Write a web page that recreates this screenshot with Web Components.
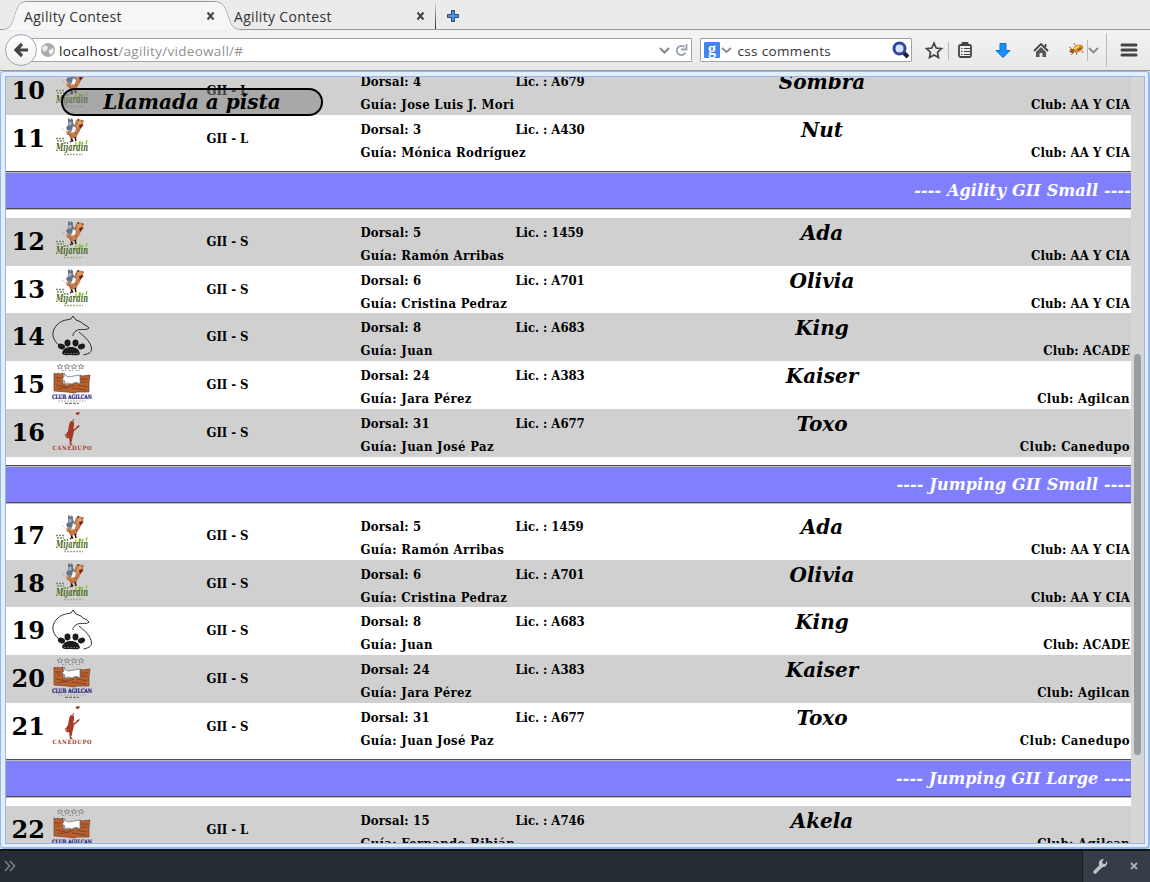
<!DOCTYPE html>
<html lang="es"><head><meta charset="utf-8"><title>Agility Contest</title>
<style>html,body{margin:0;height:882px;overflow:hidden;background:#ececec}</style></head><body>
<agility-app></agility-app>
<script>
const define=(name,html,setup)=>customElements.define(name,class extends HTMLElement{
  connectedCallback(){ if(this.shadowRoot)return; const r=this.attachShadow({mode:'open'}); r.innerHTML=typeof html==='function'?html(this):html; if(setup)setup(this,r); }
});

const logos={
mijardin:`<svg width="34" height="40" viewBox="0 0 34 40" style="margin-left:4px">
 <path d="M6 9.500l2 3 3 1 4-1 3-4 2-6 2-1.500 4 1 1 2 .5 4-2.500 1-1 4-2 3-1 2-.5 2-2.500 0-2 1-2-1-1-3-2 0-1-4-3-1z" fill="#c07c4c"/>
 <path d="M12 1l1-1 1.500 2 1-2 1.500 2 0 3 2 3-2 4-5 1-2-3 2-3z" fill="#667384"/><path d="M12.500 4l3 0 0 3-3 1z" fill="#a3b4c6"/>
 <path d="M17 8l3 2-1 4-4 1 1-3z" fill="#eef3f6"/><path d="M22 2l3 1 1 3-3 2-2 3z" fill="#dd9c66"/><path d="M23 7l4-1-1 3-2 2z" fill="#702018"/><path d="M21 2l2-1 0 2zM26 2l2 1-1 1z" fill="#3b2214"/>
 <path d="M13 16l2 3M19 14l2 2" stroke="#915331"/><path d="M15 20.500l2 3M19 19l1 4M17 22l-3 2" stroke="#33140c" stroke-width="1.500"/>
 <path d="M0 20.500h8M1 23h7" stroke="#7b8b68" stroke-width="1.500" stroke-dasharray="2 1"/>
 <path d="M8 36.500h19" stroke="#a3ac93" stroke-width="1.500" stroke-dasharray="2 1"/>
 <text x="0" y="33" textLength="32" lengthAdjust="spacingAndGlyphs" font-family="DejaVu Serif" font-style="italic" font-weight="bold" font-size="11.500" fill="#4c6a1e">Mijardin</text>
 <path d="M20 24v3M24 23l-1 4M27 24l-1 3M31 22l-1 4" stroke="#91c51f" stroke-width="1.200"/></svg>`,
acade:`<svg width="40" height="40" viewBox="0 0 40 40"><path d="M7 29C-1 23-1 14 6 8c4-4 9-4 13-5l2-3 3 4 5 2c2 3 6 3 8 6-3 3-10 0-13 3-3 2-3 3-3 5M27 16c7 6 12 10 12.500 17 0 4-4 5-8 6" fill="none" stroke="#181818" stroke-width=".9"/>
 <ellipse cx="9.500" cy="30.500" rx="3.700" ry="2.700" fill="#1c1b19" transform="rotate(25 9.500 30.500)"/><ellipse cx="15.500" cy="27" rx="3" ry="3.400" fill="#1c1b19"/><ellipse cx="23.500" cy="27" rx="3" ry="3.400" fill="#1c1b19"/><ellipse cx="29.500" cy="30.500" rx="3.700" ry="2.700" fill="#1c1b19" transform="rotate(-25 29.500 30.500)"/><path d="M10 37c1-4 4-6 9-6s8 2 9 7c-2 2-5 1-9 1s-8 1-9-2z" fill="#1c1b19"/><path d="M12 37.500h14" stroke="#888" stroke-width=".7" stroke-dasharray="2 1"/></svg>`,
agilcan:`<svg width="40" height="41" viewBox="0 0 40 41"><g fill="none" stroke="#888" stroke-width=".8"><path d="M8 0l1 2h2l-2 1 1 2-2-1-2 1 1-2-2-1h2z"/><path d="M15 0l1 2h2l-2 1 1 2-2-1-2 1 1-2-2-1h2z"/><path d="M22 0l1 2h2l-2 1 1 2-2-1-2 1 1-2-2-1h2z"/><path d="M29 0l1 2h2l-2 1 1 2-2-1-2 1 1-2-2-1h2z"/><path d="M10 6.500h4M17 6.500h4M24 6.500h4" stroke-dasharray="2 1"/></g>
 <path d="M2 9l2 1 2-1 2 1 3-1v11l4 1 9-2 4 1V11l2 1 8-1-1 7v10H25l-3 1-7-1-13-1z" fill="#b8602e" stroke="#70402a" stroke-width=".7"/><path d="M3 14h6M28 15h8M4 21l10 2M25 21l10 2M5 25l12-2M20 24l14 2M5 17h3M14 24l8-3M29 18h6" stroke="#7a3c20" stroke-width=".8" fill="none"/>
 <path d="M12 9l1 2 3 2 12-2v9l-4-2-4 2-4-1-4 1 1-3-3-2 2-2z" fill="#fff" stroke="#777" stroke-width=".8"/>
 <text x="0" y="35" textLength="40" lengthAdjust="spacingAndGlyphs" font-family="DejaVu Serif" font-size="6.200" font-weight="bold" fill="#211878" stroke="#211878" stroke-width=".2">CLUB AGILCAN</text><path d="M6 37h28" stroke="#999" stroke-width=".8" stroke-dasharray="2 1"/><path d="M13 39.300h14" stroke="#555" stroke-dasharray="3 1"/></svg>`,
canedupo:`<svg width="40" height="40" viewBox="0 0 40 40"><path d="M23.500 1.500l2-1.500 2.500.5-1 2-2.500.5zM18 10l1-1 3 1 0 4-1 3 3-1 1-2 3-1-1 2-5 4-1 5-1 3-1 4 2 2-3-.5-1-6.500-2 0-1-4 2-3 1-6z" fill="#a63a29"/><path d="M22 7l-2 3M16 26c-3 0-2-3-3-4M20 27l-2 5 2 1" stroke="#a63a29" fill="none"/><text x="0.500" y="38" textLength="39" font-family="DejaVu Serif" font-size="5.800" fill="#a63a29">CANEDUPO</text></svg>`};

define('call-row',el=>{const a=n=>el.getAttribute(n);return `<style>
:host{display:grid;grid-template-columns:39px 115px 200px 155px 207px 200px 1fr;height:47.72px;background:var(--bg);font:bold 13px "DejaVu Serif",serif;color:#000;font-stretch:condensed;white-space:nowrap;overflow:hidden;box-sizing:border-box}
.n{font-size:24px;font-stretch:normal;line-height:48px;padding-left:5.500px}.logo{padding:3px 0 0 7px}.logo svg{display:block}
.g{line-height:47px;padding-left:46.500px;letter-spacing:-.08px}.c{line-height:23px;padding-top:3px;letter-spacing:.2px;padding-left:.4px}.c span{letter-spacing:.33px}.lic{letter-spacing:-.05px}.name{font-size:20px;font-stretch:normal;font-style:italic;text-align:center;line-height:30px}.club{text-align:right;padding:26px 1px 0 0;line-height:23px;letter-spacing:var(--club,.2px)}</style>
<div class="n">${a('num')}</div><div class="logo">${logos[a('logo')]}</div><div class="g">GII - ${a('cat')}</div>
<div class="c">Dorsal: ${a('dorsal')}<br><span>Guía: ${a('guia')}</span></div><div class="c lic">Lic. : ${a('lic')}</div><div class="name">${a('dog')}</div><div class="club">Club: ${a('club')}</div>`});

define('round-header',`<style>:host{display:block;height:55.4px;padding-top:8.4px;box-sizing:border-box;background:#fff}
div{height:35px;border-top:2px solid #bbb;border-bottom:2px solid #bbb;background:#8080ff;color:#fff;font:italic bold 16px/35px "DejaVu Serif",serif;letter-spacing:.12px;text-align:right;position:relative}
div:before,div:after{content:"";position:absolute;left:0;right:0;height:1px;background:#505050}div:before{top:-2px}div:after{bottom:-1px}</style><div>---- <slot></slot> ----</div>`);

define('browser-tab',`<style>:host{display:flex;width:210px;height:30px;box-sizing:border-box;padding:1px 11px 0 7px;font:14px/32px "Open Sans",sans-serif;letter-spacing:.32px;color:#333;justify-content:space-between;position:relative}svg.x{margin-top:10px}</style><span><slot></slot></span><svg class="x" width="10" height="10"><path d="M1.500 1.500l6 7M7.500 1.500l-6 7" stroke="#444" stroke-width="2"/></svg>`);

define('browser-chrome',`<style>:host{display:block;height:71px;background:linear-gradient(#ebebeb,#ebebeb 30px,#f3f3f3 31px,#e8e8e8);box-sizing:border-box;border-bottom:1px solid #999;font-family:"Open Sans",sans-serif;color:#333}
.tabs{height:30px;display:flex;padding-left:17px;position:relative}.shape{position:absolute;left:0;top:0}.tabs browser-tab{z-index:1}.sep{width:1px;height:30px;margin-left:-2px;background:linear-gradient(#e8e8e8,#222)}.plus{margin:10px 0 0 11px}
.bar{height:40px;display:flex;align-items:center;padding-left:5px}
.back{width:30px;height:30px;border:1px solid #9aa8b8;border-radius:50%;background:linear-gradient(#fff,#f0f0f0);display:flex;align-items:center;justify-content:center;z-index:1;flex:none}
.f{background:#fff;border:1px solid #a4a4a4;display:flex;align-items:center;box-sizing:border-box;height:24px;font-size:13.500px;line-height:20px;border-radius:1px}
.f span{padding-top:2px}
.url{width:664px;margin-left:-8px;padding-left:12px;border-left:0}.url b{font-weight:400;color:#222}.url span{color:#929292;margin-left:4px;flex:1;letter-spacing:.3px}
.search{width:212px;margin-left:8px;padding:0 1px 0 3px}.search span{flex:1;margin-left:5px;letter-spacing:.35px}.icons{display:block;margin-left:1px;margin-top:1px}</style>
<div class="tabs"><svg class="shape" width="1150" height="30"><path d="M0 29.500H3C19 29.500 11 1.500 27 1.500H214C232 1.500 224 29.500 240 29.500H1150V31H0z" fill="none" stroke="#999"/><path d="M3 30C19 29.500 11 2 27 2H214C232 2 224 29.500 240 30z" fill="#f6f6f6"/></svg>
<browser-tab>Agility Contest</browser-tab><browser-tab>Agility Contest</browser-tab><i class="sep"></i><svg class="plus" width="13" height="13"><path d="M4.500.5h3v4h4v3h-4v4h-3v-4h-4v-3h4z" fill="#5f91d0" stroke="#164788"/></svg></div>
<div class="bar"><div class="back"><svg width="16" height="16"><path d="M9 2L3 8l6 6M3 8h12" fill="none" stroke="#444" stroke-width="3.200"/></svg></div>
<div class="url f"><svg width="14" height="14"><circle cx="7" cy="7" r="7" fill="#aaa"/><path d="M1 5l3-3 3 2-1 3-3 2zM8 7l4-2 1 3-3 4-2-2z" fill="#eee"/></svg><span><b>localhost</b>/agility/videowall/#</span><svg width="36" height="20"><path d="M5 8l4.500 4.500L14 8" fill="none" stroke="#888" stroke-width="2"/><path d="M29.500 7a4.600 4.600 0 1 0 1 5.500M31.500 4v5.500h-5.500" fill="none" stroke="#99a4ae" stroke-width="1.800"/></svg></div>
<div class="search f"><svg width="28" height="20"><rect x="0" y="2" width="16" height="16" rx="1" fill="#4384f5"/><text x="4" y="13.500" font-family="Liberation Serif" font-size="16" font-weight="bold" fill="#fff">g</text><path d="M18 8l4.500 4L27 8" fill="none" stroke="#888" stroke-width="1.800"/></svg><span>css comments</span><svg width="18" height="18"><path d="M11 11l5 5" stroke="#222" stroke-width="4"/><circle cx="7.500" cy="7.500" r="5.500" fill="#d6e4fa" stroke="#2e479b" stroke-width="3"/></svg></div>
<svg class="icons" width="237" height="39"><path d="M21 12l2.200 5 5.300.6-4 3.600 1 5.300-4.500-2.600-4.500 2.600 1-5.300-4-3.600 5.300-.6z" fill="none" stroke="#444" stroke-width="1.700"/><g stroke="#bbb"><path d="M35.500 11v18M174.500 9v21M193.500 2v34"/></g><rect x="46" y="14" width="12" height="12" rx="1.500" fill="none" stroke="#444" stroke-width="1.800"/><path d="M49 13v-1.500h6v1.500z" fill="#444" stroke="#444"/><path d="M48 17.500h1.500M51 17.500h6M48 20.500h1.500M51 20.500h6M48 23.500h1.500M51 23.500h6" stroke="#444"/><path d="M87 12.500h6v7h4l-7 7-7-7h4z" fill="#1590ff" stroke="#0a70d0"/><path d="M121 20l7-7 7 7M132.500 13v3" fill="none" stroke="#444" stroke-width="1.800"/><path d="M123 21l5-5 5 5v5h-3.500v-4h-3v4H123z" fill="#555"/><ellipse cx="165" cy="17.500" rx="5.500" ry="3.600" fill="#df812c" transform="rotate(-20 165 17.500)"/><ellipse cx="159" cy="20" rx="2.600" ry="2" fill="#a8571f"/><path d="M156 16l4 3M158 24l3-3M164 24l-1-3M169 20l1 2M162 14l-1-2" stroke="#8c491f" stroke-width=".8"/><path d="M161 18l5-3" stroke="#ffe35e" stroke-width="1.500"/><path d="M165 19l3-2" stroke="#5b2b10"/><path d="M176 17l4.500 4.500 4.500-4.500" fill="none" stroke="#888" stroke-width="1.800"/><path d="M209 14h14M209 19h14M209 24h14" stroke="#444" stroke-width="3" stroke-linecap="round"/></svg></div>`);

define('call-panel',`<style>:host{display:block;height:778px;box-sizing:border-box;border:1px solid #95b8e7;border-width:1px 2px 2px 1px;border-radius:4px;background:#e4edfc;padding:4px 3px 4px 4px}
.inner{height:768px;box-sizing:border-box;border:1px solid #95b8e7;display:flex;overflow:hidden;background:#fff;position:relative}
.list{flex:1;margin-top:-9.900px;min-width:0}.track{width:13px;background:#d6d6d6}.thumb{width:7px;height:401px;border-radius:4px;background:#999b9e;margin:277px 0 0 3px}
.pill{position:absolute;left:55px;top:11px;width:262px;height:28px;box-sizing:border-box;border:2px solid #000;border-radius:14px;background:rgba(128,128,128,.5);font:italic bold 20px/24px "DejaVu Serif",serif;text-align:center}</style>
<div class="inner"><div class="list"></div><div class="track"><div class="thumb"></div></div><div class="pill">Llamada a pista</div></div>`,(el,r)=>{
 const aa='mijardin|AA Y CIA';
 const small=['5|1459|Ramón Arribas|Ada|'+aa,'6|A701|Cristina Pedraz|Olivia|'+aa,'8|A683|Juan|King|acade|ACADE','24|A383|Jara Pérez|Kaiser|agilcan|Agilcan','31|A677|Juan José Paz|Toxo|canedupo|Canedupo'];
 const groups=[['L','',['4|A679|Jose Luis J. Mori|Sombra|'+aa,'3|A430|Mónica Rodríguez|Nut|'+aa]],['S','Agility GII Small',small],['S','Jumping GII Small',small],['L','Jumping GII Large',['15|A746|Fernando Bibián|Akela|agilcan|Agilcan']]];
 const clubSpacing={'AA Y CIA':.12,ACADE:.12,Agilcan:.36,Canedupo:.42};
 let n=10,h='';
 for(const [cat,title,rows] of groups){ if(title)h+=`<round-header>${title}</round-header>`;
  for(const row of rows){const [d,l,g,dog,logo,club]=row.split('|');h+=`<call-row num="${n}" cat="${cat}" dorsal="${d}" lic="${l}" guia="${g}" dog="${dog}" logo="${logo}" club="${club}" style="--bg:${n%2?'#fff':'#d0d0d0'};--club:${clubSpacing[club]}px"></call-row>`;n++}}
 r.querySelector('.list').innerHTML=h;
});

define('dev-toolbar',`<style>:host{display:flex;height:33px;box-sizing:border-box;background:#242b33;border-top:2px solid #10151b;justify-content:space-between}.r{width:68px;background:#343c45;border-left:1px solid #171c22;box-sizing:border-box}svg{display:block}</style>
<svg width="20" height="31"><path d="M5 10l4.500 5-4.500 5M10 10l4.500 5-4.500 5" fill="none" stroke="#7b838b" stroke-width="1.500"/></svg><div class="r"><svg width="67" height="31"><path d="M12 21l7-7" stroke="#bcc3c9" stroke-width="3.500" stroke-linecap="round"/><path d="M16 14c-1-4 2-6 5-6l-2 3 1 2 2 0 2-3c1 4-2 7-6 6z" fill="#bcc3c9"/><path d="M48 12l6 6M54 12l-6 6" stroke="#a5adb5" stroke-width="2"/></svg></div>`);
define('agility-app',`<style>:host{display:block;width:1150px;height:882px}</style><browser-chrome></browser-chrome><call-panel></call-panel><dev-toolbar></dev-toolbar>`);
</script></body></html>
